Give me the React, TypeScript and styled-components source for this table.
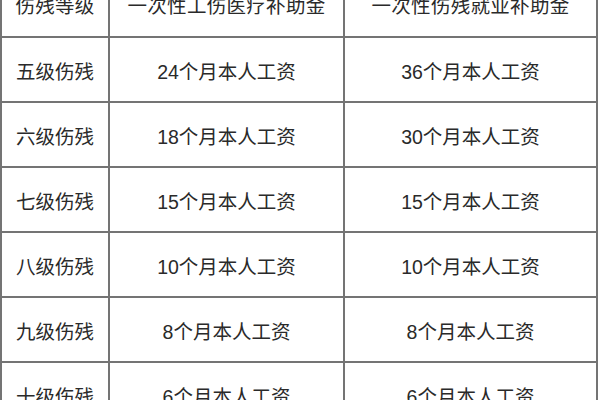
import React from "react";
import styled, { createGlobalStyle } from "styled-components";

const Global = createGlobalStyle`
  html, body {
    margin: 0;
    padding: 0;
    background: #ffffff;
    overflow: hidden;
  }
  body {
    font-family: "Liberation Sans", "Noto Sans CJK SC", sans-serif;
  }
`;

const Page = styled.div`
  width: 600px;
  height: 400px;
  overflow: hidden;
  background: #ffffff;
`;

const Table = styled.div`
  display: grid;
  grid-template-columns: 106px 233px 251px;
  grid-template-rows: 66px repeat(6, 63px);
  gap: 2px;
  padding: 2px;
  width: max-content;
  margin-top: -32px;
  background: #747474;
`;

const Cell = styled.div<{ $head?: boolean }>`
  background: #ffffff;
  display: flex;
  align-items: center;
  justify-content: center;
  font-size: 19.5px;
  letter-spacing: ${(p) => (p.$head ? "0.3px" : "0px")};
  color: #2a2a2a;
  white-space: nowrap;
  padding-top: 2px;
`;

const rows: [string, string, string][] = [
  ["五级伤残", "24个月本人工资", "36个月本人工资"],
  ["六级伤残", "18个月本人工资", "30个月本人工资"],
  ["七级伤残", "15个月本人工资", "15个月本人工资"],
  ["八级伤残", "10个月本人工资", "10个月本人工资"],
  ["九级伤残", "8个月本人工资", "8个月本人工资"],
  ["十级伤残", "6个月本人工资", "6个月本人工资"],
];

export default function App() {
  return (
    <Page>
      <Global />
      <Table>
        <Cell $head>伤残等级</Cell>
        <Cell $head>一次性工伤医疗补助金</Cell>
        <Cell $head>一次性伤残就业补助金</Cell>
        {rows.map((r) =>
          r.map((t, i) => <Cell key={r[0] + i}>{t}</Cell>)
        )}
      </Table>
    </Page>
  );
}
